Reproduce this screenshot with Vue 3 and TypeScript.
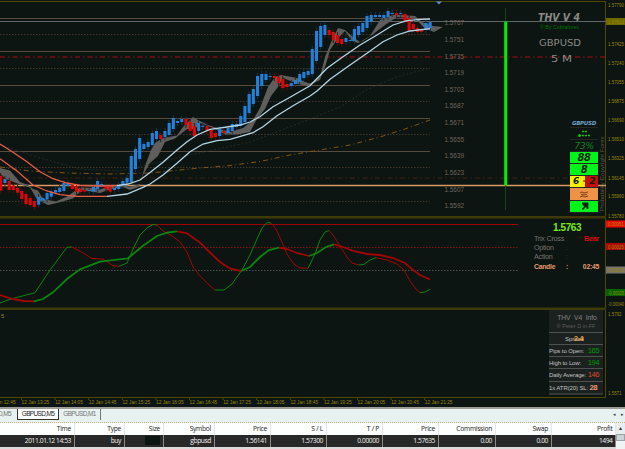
<template>
  <div class="terminal">
    <div class="chart-area">
      <svg class="chart" width="625" height="408" viewBox="0 0 625 408">
        <!-- pane borders -->
        <path class="frame" d="M0 1.5H605.5V397.5M0 397.5H605.5" />
        <rect class="splitter" x="0" y="216" width="606" height="2.5" />
        <rect class="splitter" x="0" y="307.5" width="606" height="2.5" />

        <!-- pivot levels -->
        <line v-for="l in levels" :key="l.y" x1="0" :x2="l.to" :y1="l.y" :y2="l.y" :class="l.kind" />

        <polygon v-for="(c, i) in clouds" :key="'c' + i" :points="c" class="cloud" />
        <polyline class="slow" points="0,167 30,171 67,173 110,174 150,173 200,168 230,165.5 260,161.5 290,155 320,150 350,145 380,137 405,129 430,120" />
        <polyline class="faint" points="0,145 40,158 80,169 120,171 150,164 190,155 250,142 300,123 340,107 366,90 396,77 430,68" />

        <g v-for="(c, i) in candles" :key="i" :class="c.up ? 'up' : 'down'">
          <rect class="wick" :x="c.x - 0.5" :y="c.top - 3" width="1" :height="c.height + 6" />
          <rect :x="c.x - 1.5" :y="c.top" width="3.1" :height="c.height" />
        </g>

        <polyline class="ma-red" points="0,144 13,152.3 27,161.7 40,171.7 53,178.7 67,183 80,185.3 100,186 117,185.7" />
        <polyline class="ma-red" points="0,158.7 17,171 33,185 47,191 60,194.7 77,196.3 107,196.3" />
        <polyline class="ma-blue" points="117,185.7 128,184 140,180 150,172.5 163,162.3 177,150 187,141.7 197,135 210,129.3 227,127 240,125 250,122 260,116.7 273,106.7 290,97.3 310,85.7 327,68.3 343,56.7 360,45 377,35 393,25 407,20.7 420,19.3 430,19" />
        <polyline class="ma-blue" points="107,196.3 127,194 143,187.3 150,184 163,175 177,163.3 190,151.7 203,144 217,140.7 230,139.3 243,135.7 253,132.7 263,126.7 277,115.7 293,105.7 310,96 317,91 330,79.3 350,65 367,53.3 383,41.7 397,35 410,31 430,28.7" />

        <path class="marker" d="M436 1.5h6l-3 3z" />
        <line class="bar-wick" x1="505.5" x2="505.5" y1="8" y2="210" />
        <rect class="range-bar" x="504.2" y="21.5" width="3" height="164" />

        <text
          v-for="(p, i) in pivotPrices"
          :key="p"
          class="pivot"
          x="444.5"
          :y="25.2 + i * 16.65"
          textLength="19.5"
          lengthAdjust="spacingAndGlyphs"
        >{{ p }}</text>

        <!-- trix pane -->
        <polyline class="trix green" points="0,303 10,299.3 35,292.7 50,270 67,247.3 72,247" />
        <polyline class="trix red" points="72,247 82,252.3 92,258.5 103,259 113,265.7 119,266.3" />
        <polyline class="trix green" points="119,266.3 127,263 134,247 140,235 147,228 153,224.5 157,225" />
        <polyline class="trix red" points="157,225 163,231 172,236 180,241.7 187,252 193,267 200,276 208,284 215,290" />
        <polyline class="trix green" points="215,290 224,290 232,284 242,270 250,255 257,239 262,228 267,222.5 271,223" />
        <polyline class="trix red" points="271,223 276,229 281,240 287,254 293,263 299,267.7 308,268.3" />
        <polyline class="trix green" points="308,268.3 315,254 320,240 325,232 329,230.5" />
        <polyline class="trix red" points="329,230.5 333,235 340,246 347,257 352,263 359,265" />
        <polyline class="trix green" points="359,265 364,264.3 370,260 376,257.7" />
        <polyline class="trix red" points="376,257.7 387,260 397,264 404,270 410,281 416,289 420,292.7" />
        <polyline class="trix green" points="420,292.7 425,292 430,289.3" />

        <polyline class="signal red" points="0,295 13,299 24,301 34,301.3" />
        <polyline class="signal green" points="34,301.3 43,299 53,292.3 67,279 80,269.3 100,261.7 128,258.3 143,245.7 157,236 168,232.5 177,231.3" />
        <polyline class="signal red" points="177,231.3 187,233.3 200,242.7 210,252.5 220,262 230,268.5 241,271" />
        <polyline class="signal green" points="241,271 250,267 260,257 269,250 279,247.7" />
        <polyline class="signal red" points="279,247.7 287,249 297,253 309,256" />
        <polyline class="signal green" points="309,256 317,253 326,247 334,244.3" />
        <polyline class="signal red" points="334,244.3 343,247 353,251 367,254 380,255 393,258 405,263 413,270 420,275 430,279.5" />

        <!-- price axis -->
        <rect x="606" y="18" width="19" height="7" fill="#6d6800" />
        <rect x="606" y="220.5" width="19" height="7" fill="#f00808" />
        <rect x="606" y="243" width="19" height="7" fill="#b30808" />
        <rect x="606" y="266.5" width="19" height="7" fill="#77746f" />
        <rect x="606" y="289" width="19" height="7" fill="#006400" />
        <text
          v-for="a in axisLabels"
          :key="a.y"
          class="axis"
          x="608"
          :y="a.y + 2.1"
          :textLength="a.w ?? 16"
          lengthAdjust="spacingAndGlyphs"
        >{{ a.text }}</text>
        <text class="axis" x="1" y="317.5">5</text>

        <!-- time axis -->
        <g v-for="(t, i) in times" :key="t">
          <line class="tick" :x1="21.5 + (i - 1) * 33.6" :x2="21.5 + (i - 1) * 33.6" y1="397" y2="400" />
          <text
            class="axis"
            :x="-12 + i * 33.6"
            y="404.3"
            textLength="27.7"
            lengthAdjust="spacingAndGlyphs"
          >12 Jan {{ t }}</text>
        </g>
      </svg>

      <svg class="brand" width="80" height="56" viewBox="0 0 80 56">
        <text class="brand-name" x="18" y="9.5" textLength="42" lengthAdjust="spacingAndGlyphs">THV V 4</text>
        <text class="brand-author" x="20" y="18" textLength="39" lengthAdjust="spacingAndGlyphs">© By Cobraforex</text>
        <text class="brand-pair" x="19" y="35" textLength="42" lengthAdjust="spacingAndGlyphs">GBPUSD</text>
        <text class="brand-pair" x="31" y="50.5" textLength="21" lengthAdjust="spacingAndGlyphs">5 M</text>
      </svg>

      <div class="strength">
        <div class="strength-title">GBPUSD</div>
        <div class="strength-body">
          <div class="strength-cells">
            <div class="cell">
              <svg class="dots" width="14" height="8" viewBox="0 0 14 8">
                <path d="M5 1.5h2M8 1.5h2M1 5.5h3M5 5.5h2M8 5.5h2M11 5.5h2M2.5 4v3" />
              </svg>
            </div>
            <div class="cell percent">73%</div>
            <div class="cell lime">88</div>
            <div class="cell lime">8</div>
            <div class="cell split"><span>6</span><b>-</b><span>2</span></div>
            <div class="cell orange">
              <svg width="10" height="7" viewBox="0 0 10 7"><path d="M1 2l2-1 2 1 4-1M1 6l3-1 2 1 3-1M2 3.7h6" /></svg>
            </div>
            <div class="cell lime">
              <svg class="arrow" width="9" height="9" viewBox="0 0 9 9"><path d="M2 1.5h5.5V7M7 2L2.5 7.5M3.5 2.5L7 5" /></svg>
            </div>
          </div>
          <div class="strength-side">Probability Copyright Forex</div>
        </div>
      </div>

      <div class="trix-info">
        <div class="last-price">1.5763</div>
        <div class="trix-row"><span>Trix Cross</span><span>:</span><b class="bear">Bear</b></div>
        <div class="trix-row"><span>Option</span><span>:</span><b></b></div>
        <div class="trix-row"><span>Action</span><span>:</span><b></b></div>
        <div class="trix-row candle"><b>Candle</b><b>:</b><b>02:45</b></div>
      </div>

      <div class="info">
        <div class="info-head">
          <div class="info-title">THV&nbsp; V4&nbsp; Info</div>
          <div class="info-author">® Peter D in FF</div>
        </div>
        <div v-for="r in infoRows" :key="r.label" class="info-row" :class="r.tone">
          <span>{{ r.label }}</span><b>{{ r.value }}</b>
        </div>
      </div>
    </div>

    <div class="tabs">
      <div class="tab first">GBPUSD,M5</div>
      <div class="tab active">GBPUSD,M5</div>
      <div class="tab">GBPUSD,M1</div>
      <div class="tab-arrows"><span>◂</span><span>▸</span></div>
    </div>

    <div class="orders">
      <div class="grid head">
        <div v-for="(c, i) in columns" :key="i">{{ c }}</div>
      </div>
      <div class="grid row">
        <div v-for="(c, i) in order" :key="i"><i v-if="i === 2" class="hidden-size"></i>{{ c }}</div>
      </div>
      <div class="scroll"><div class="scroll-up">▴</div><div class="thumb"></div></div>
    </div>
  </div>
</template>

<script setup lang="ts">
interface Candle {
  x: number;
  top: number;
  height: number;
  up: boolean;
}

const STEP = 4.21;

// [direction, top, bottom]
const raw: [string, number, number][] = [
  ['d', 176, 190.7], ['u', 179, 183], ['d', 181, 190], ['d', 185.5, 190], ['d', 188, 192.7], ['d', 191, 199],
  ['d', 194, 204], ['d', 198, 205], ['d', 201, 207], ['u', 197, 204.7], ['u', 198, 200.5], ['u', 193, 199.5],
  ['u', 191.7, 196.7], ['u', 190, 192.5], ['u', 187.7, 192], ['u', 183, 191], ['u', 183, 186], ['d', 185, 189],
  ['d', 186, 192], ['d', 188.7, 192], ['d', 190, 191.7], ['u', 190, 191], ['u', 187, 191.7], ['u', 181, 189],
  ['u', 184, 185.7], ['d', 185.5, 189], ['d', 186, 191.7], ['u', 188, 190], ['u', 185, 189], ['u', 181, 185.7],
  ['u', 178, 182.7], ['u', 156, 182], ['u', 149, 169], ['u', 138, 159], ['u', 144, 149], ['u', 142, 147],
  ['u', 133, 145], ['u', 131, 139], ['d', 135, 139], ['u', 131, 137], ['u', 123, 135], ['u', 118, 129],
  ['u', 121, 123], ['u', 119, 122], ['d', 119, 125], ['d', 122, 131], ['d', 126, 136], ['u', 123, 131],
  ['u', 125.7, 127], ['d', 126, 131], ['d', 130, 138], ['d', 133, 137], ['u', 129, 136], ['d', 131, 133],
  ['u', 128, 133], ['u', 124, 131], ['u', 124, 127], ['u', 116, 126], ['u', 106, 122], ['u', 94, 113],
  ['u', 89, 104], ['u', 76, 96], ['u', 74, 86], ['u', 74, 80], ['u', 76, 77], ['d', 76, 78],
  ['d', 77, 83], ['d', 79, 88], ['d', 84, 87], ['u', 83, 86], ['u', 80, 84], ['u', 74, 82],
  ['u', 72, 78], ['u', 71, 75], ['u', 49, 74], ['u', 31, 61], ['u', 26, 47], ['u', 25, 35],
  ['d', 30, 35], ['d', 32, 40], ['d', 35, 43], ['d', 39, 44], ['u', 38, 42], ['u', 40, 41],
  ['u', 29, 41], ['u', 26, 35], ['u', 23, 32], ['u', 16, 28], ['u', 15, 22], ['u', 15, 17],
  ['u', 15, 17], ['u', 15, 18], ['u', 11, 17], ['u', 13, 14], ['d', 13, 15.3], ['u', 13, 14],
  ['d', 14, 21], ['d', 18, 31], ['d', 24, 29], ['d', 28, 32], ['d', 29.5, 31.7], ['u', 23, 30],
  ['u', 22, 28],
];

const candles: Candle[] = raw.map(([dir, top, bottom], i) => ({
  x: 0.7 + i * STEP,
  top,
  height: bottom - top,
  up: dir === 'u',
}));

const clouds = [
  '0,168 10,170.5 20,182 28,185 33,189 38,190.5 43,199 56,201.5 67,196.5 80,187.5 95,188 100,189.5 110,186 123,184 129,187 140,184 145,166 151,150 155,143 163,138 177,135.5 183,127 193,117 198,120 208,125 220,129 230,132 243,128 253,120 260,108 268,87 275,77 281,75 297,78 305,82 310,83.5 320,77 325,57 332,40 338,28 345,30 353,37 360,42 370,36 380,20 393,15 403,15 415,16 423,22.5 433,26 443,27 434,32 425,28.5 415,18.5 397,17 385,25 372,35 363,41 358,43 352,41 345,31 338,38 330,50 326,64 320,80 308,86 298,84 283,78 278,87 271,96 265,109 257,119 250,132 237,134.5 225,134.5 213,128 200,123 195,129 187,129 175,138.5 165,142 158,156 150,163 143,175 139,187 130,190 123,187 111,189 100,193 82,190 73,198.5 57,203 48,205 37,199.5 30,187.5 20,184.5 7,179.5 0,174',
];

const levels = [
  { y: 18.5, to: 430, kind: 'level-solid' },
  { y: 21.5, to: 606, kind: 'level-gray' },
  { y: 34.5, to: 430, kind: 'level-dot' },
  { y: 51.5, to: 430, kind: 'level-solid' },
  { y: 57, to: 606, kind: 'level-red' },
  { y: 68.5, to: 430, kind: 'level-dot' },
  { y: 85.5, to: 430, kind: 'level-solid' },
  { y: 101.5, to: 430, kind: 'level-dot' },
  { y: 118.5, to: 430, kind: 'level-solid' },
  { y: 134.5, to: 430, kind: 'level-dot' },
  { y: 151.5, to: 430, kind: 'level-solid' },
  { y: 167.5, to: 430, kind: 'level-dot' },
  { y: 178, to: 606, kind: 'level-brown' },
  { y: 185.5, to: 606, kind: 'level-peach' },
  { y: 201.5, to: 430, kind: 'level-dot' },
  { y: 224.5, to: 518, kind: 'trix-top' },
  { y: 247.5, to: 518, kind: 'trix-dot' },
  { y: 270.5, to: 518, kind: 'trix-zero' },
];

const pivotPrices = [
  '1.5767', '1.5751', '1.5735', '1.5719', '1.5703', '1.5687',
  '1.5671', '1.5655', '1.5639', '1.5623', '1.5607', '1.5592',
];

const axisLabels: { text: string; y: number; w?: number }[] = [
  { text: '1.57790', y: 5 },
  { text: '1.57610', y: 21.5 },
  { text: '1.57425', y: 43.5 },
  { text: '1.57240', y: 62.5 },
  { text: '1.57055', y: 81.5 },
  { text: '1.56875', y: 100.5 },
  { text: '1.56690', y: 120 },
  { text: '1.56510', y: 139 },
  { text: '1.56325', y: 158 },
  { text: '1.56145', y: 177.5 },
  { text: '1.55960', y: 196 },
  { text: '1.55780', y: 215.5 },
  { text: '0.00051', y: 224 },
  { text: '0.00025', y: 246.5 },
  { text: '0.00000', y: 270 },
  { text: '-0.00025', y: 292.5 },
  { text: '-0.00040', y: 304 },
  { text: '1.5792', y: 313.5, w: 13.5 },
  { text: '1.5571', y: 393, w: 13.5 },
];

const times = [
  '12:45', '13:25', '14:05', '14:45', '15:25', '16:05', '16:45',
  '17:25', '18:05', '18:45', '19:25', '20:05', '20:45', '21:25',
];

const infoRows = [
  { label: 'Spread', value: '2.4', tone: 'spread' },
  { label: 'Pips to Open:', value: '165', tone: 'gain' },
  { label: 'High to Low:', value: '194', tone: 'gain' },
  { label: 'Daily Average:', value: '146', tone: 'loss' },
  { label: '1x ATR(20) SL:', value: '28', tone: 'atr' },
];

const columns = ['Time', 'Type', 'Size', 'Symbol', 'Price', 'S / L', 'T / P', 'Price', 'Commission', 'Swap', 'Profit'];
const order = ['2011.01.12 14:53', 'buy', '', 'gbpusd', '1.56141', '1.57300', '0.00000', '1.57635', '0.00', '0.00', '1494'];
</script>

<style>
body {
  margin: 0;
  overflow: hidden;
  background: #0c1512;
}
</style>

<style scoped>
.terminal {
  width: 625px;
  height: 449px;
  display: flex;
  flex-direction: column;
  overflow: hidden;
  background: #0c1512;
  font-family: 'Liberation Sans', Arial, sans-serif;
}

.chart-area {
  position: relative;
  height: 407px;
  flex: none;
  overflow: hidden;
}

.chart {
  display: block;
}

.chart polyline {
  fill: none;
}

.frame {
  fill: none;
  stroke: #514800;
  stroke-width: 1;
}

.splitter {
  fill: #3f3a08;
}

.level-solid { stroke: #594a40; }
.level-gray { stroke: #62666b; }
.level-dot { stroke: #44352c; stroke-dasharray: 1.5 1.5; }
.level-red { stroke: #a80c0c; stroke-dasharray: 5 3 1.5 3; }
.level-brown { stroke: #40230f; stroke-dasharray: 5 3 1.5 3; }
.level-peach { stroke: #d69a62; stroke-width: 1.3; }
.trix-top { stroke: #a00000; stroke-width: 1.2; }
.trix-dot { stroke: #8a1010; stroke-dasharray: 1.5 1.5; }
.trix-zero { stroke: #4a504d; stroke-dasharray: 1.5 1.5; }

.cloud { fill: #605e5c; }
.slow { stroke: #845414; stroke-width: 1; stroke-dasharray: 5 3 1 3; }
.faint { stroke: #2b302d; stroke-width: 0.8; stroke-dasharray: 2 2; }
.up rect { fill: #2280d8; }
.down rect { fill: #e00505; }
.up rect.wick { fill: #143452; }
.down rect.wick { fill: #4a1209; }
.ma-red { stroke: #e95c46; stroke-width: 1.3; }
.ma-blue { stroke: #b5d5e6; stroke-width: 1.3; }
.marker { fill: #5e8fc4; }
.bar-wick { stroke: #14451a; stroke-width: 1; }
.range-bar { fill: #00f000; }

.trix { stroke-width: 1; }
.signal { stroke-width: 1.8; }
.green { stroke: #0b850e; }
.red { stroke: #a30505; }

.pivot {
  font-size: 7.4px;
  fill: #76645c;
}

.axis {
  font-size: 5.6px;
  fill: #9c8800;
}

.tick { stroke: #514800; }

.brand {
  position: absolute;
  left: 520px;
  top: 11px;
}

.brand text { fill: #8b8987; }

.brand .brand-name {
  font: italic bold 11px 'DejaVu Sans', sans-serif;
}

.brand .brand-author {
  font-size: 6px;
  fill: #007400;
}

.brand .brand-pair {
  font: 8.5px 'DejaVu Sans', sans-serif;
}

.strength {
  position: absolute;
  left: 570px;
  top: 120px;
  width: 35px;
}

.strength-title {
  font: italic bold 5.5px/7px 'DejaVu Sans', sans-serif;
  letter-spacing: -0.3px;
  color: #6f9fc4;
  margin-left: 2px;
}

.strength-body {
  display: flex;
  gap: 1px;
}

.strength-cells {
  width: 28px;
  display: flex;
  flex-direction: column;
  gap: 1px;
  background: #222725;
  padding: 1px 0;
}

.cell {
  height: 11.1px;
  display: flex;
  align-items: center;
  justify-content: center;
  font: italic bold 10px/11px 'DejaVu Sans', sans-serif;
  letter-spacing: -0.5px;
  color: #07210a;
  background: #0c1512;
}

.percent {
  color: #12801e;
  font-weight: normal;
  font-size: 9.4px;
}

.lime { background: #00f41a; }

.split {
  justify-content: space-between;
  padding: 0 3px;
  font-size: 9px;
  background: linear-gradient(90deg, #f8f000 0 55%, #c80c0c 55%);
}

.split b { font-size: 7px; }

.orange { background: #ed9247; }

.cell svg path {
  fill: none;
  stroke: #6d3814;
  stroke-width: 0.9;
}

.cell svg.dots path {
  stroke: #00c800;
  stroke-width: 1.4;
}

.cell svg.arrow path {
  stroke: #07210a;
  stroke-width: 1.8;
}

.strength-side {
  writing-mode: vertical-rl;
  transform: rotate(180deg);
  font-size: 6.2px;
  line-height: 6px;
  white-space: nowrap;
  height: 84px;
  color: #5d5752;
}

.trix-info {
  position: absolute;
  left: 534px;
  top: 221px;
  width: 66px;
  font-size: 7.2px;
  color: #77736f;
}

.last-price {
  font-size: 10px;
  line-height: 13px;
  font-weight: bold;
  color: #7aea0c;
  margin-left: 19px;
  letter-spacing: -0.4px;
}

.trix-row {
  display: grid;
  grid-template-columns: 32px 6px 1fr;
  line-height: 9px;
  white-space: nowrap;
  letter-spacing: -0.25px;
}

.trix-row > :last-child { text-align: right; margin-right: 1px; }
.trix-row > :nth-child(2) { color: #383633; }
.trix-row .bear { color: #d80808; }

.trix-row.candle {
  margin-top: 1px;
  color: #e39b6b;
  font-size: 6.8px;
}

.candle > :nth-child(2) { color: #e39b6b; }

.info {
  position: absolute;
  left: 549px;
  top: 310px;
  width: 54px;
  display: flex;
  flex-direction: column;
  background: #1b211f;
  border-bottom: 2px solid #323735;
}

.info-head {
  height: 19px;
  padding-top: 3px;
  text-align: center;
  border-bottom: 1px solid #4d514f;
  color: #858585;
}

.info-title {
  font-size: 6.8px;
  line-height: 10px;
  letter-spacing: -0.1px;
  padding-left: 2px;
}

.info-author {
  font-size: 5.6px;
  line-height: 6px;
  color: #5d5d5d;
}

.info-row {
  height: 11px;
  box-sizing: border-box;
  display: flex;
  align-items: center;
  justify-content: space-between;
  padding-right: 4px;
  border-bottom: 1px solid #4d514f;
  font-size: 6px;
  line-height: 10px;
  letter-spacing: -0.1px;
  white-space: nowrap;
  color: #c2c2c2;
}

.info-row b {
  font-size: 7.8px;
  letter-spacing: -0.6px;
  font-weight: normal;
}

.spread {
  height: 12px;
  justify-content: center;
}

.spread b { margin-left: -10px; color: #e7983f; font-weight: bold; }
.gain { height: 12px; }
.gain b { color: #009900; }
.loss { height: 13px; }
.loss b { color: #d6492e; }
.atr b { color: #ed9b76; font-weight: bold; padding-right: 2px; }
.atr { border-bottom: 0; }

.tabs {
  box-sizing: border-box;
  height: 16px;
  flex: none;
  display: flex;
  align-items: flex-start;
  background: #e7f1f0;
  border-top: 2px solid #9e9e98;
  border-bottom: 1px dotted #cfae80;
}

.tab {
  box-sizing: border-box;
  width: 42px;
  height: 11px;
  font-size: 6.5px;
  line-height: 10px;
  letter-spacing: -0.65px;
  text-align: center;
  color: #777;
  border-right: 1px solid #777;
}

.tab.first {
  width: 17px;
  display: flex;
  justify-content: flex-end;
  overflow: hidden;
  padding-right: 6px;
  border: 0;
}

.tab.active {
  background: #fff;
  color: #222;
  border: 1px solid #333;
  border-top: 0;
}

.tab-arrows {
  margin-left: auto;
  display: flex;
  gap: 5px;
  font-size: 5px;
  line-height: 10px;
  padding-right: 1px;
  color: #444;
}

.orders {
  flex: none;
  height: 26px;
  display: grid;
  grid-template: 12px 12px 2px / 616px 9px;
  background: #d8dbda;
}

.grid {
  display: grid;
  grid-template-columns: 74.5px 50px 39px 51px 56px 56px 56px 56px 57px 56px 64.5px;
  font-family: 'Open Sans', 'Liberation Sans', sans-serif;
  font-size: 6.7px;
  font-weight: 500;
  letter-spacing: -0.42px;
  line-height: 12px;
}

.grid > div {
  text-align: right;
  padding-right: 2.5px;
  overflow: hidden;
  white-space: nowrap;
}

.head {
  grid-column: 1;
  background: #fdfefe;
  color: #222;
  letter-spacing: -0.28px;
}

.head > div { border-right: 1px solid #e5e5e5; }

.row {
  grid-column: 1;
  grid-row: 2;
  background: #282828;
  color: #f0f0f0;
}

.row > div { border-right: 1px solid #8a8a8a; }

.hidden-size {
  display: inline-block;
  width: 15px;
  height: 9px;
  margin-top: 1px;
  background: #0c1512;
}

.scroll {
  grid-column: 2;
  grid-row: 1 / 4;
  background: #f1f4f4;
  text-align: center;
  font-size: 6px;
  line-height: 10px;
  color: #333;
}

.scroll-up { height: 11px; background: #e8edee; }

.thumb {
  height: 5px;
  background: #ccd3d8;
  border: 1px solid #9aa3a8;
}
</style>
